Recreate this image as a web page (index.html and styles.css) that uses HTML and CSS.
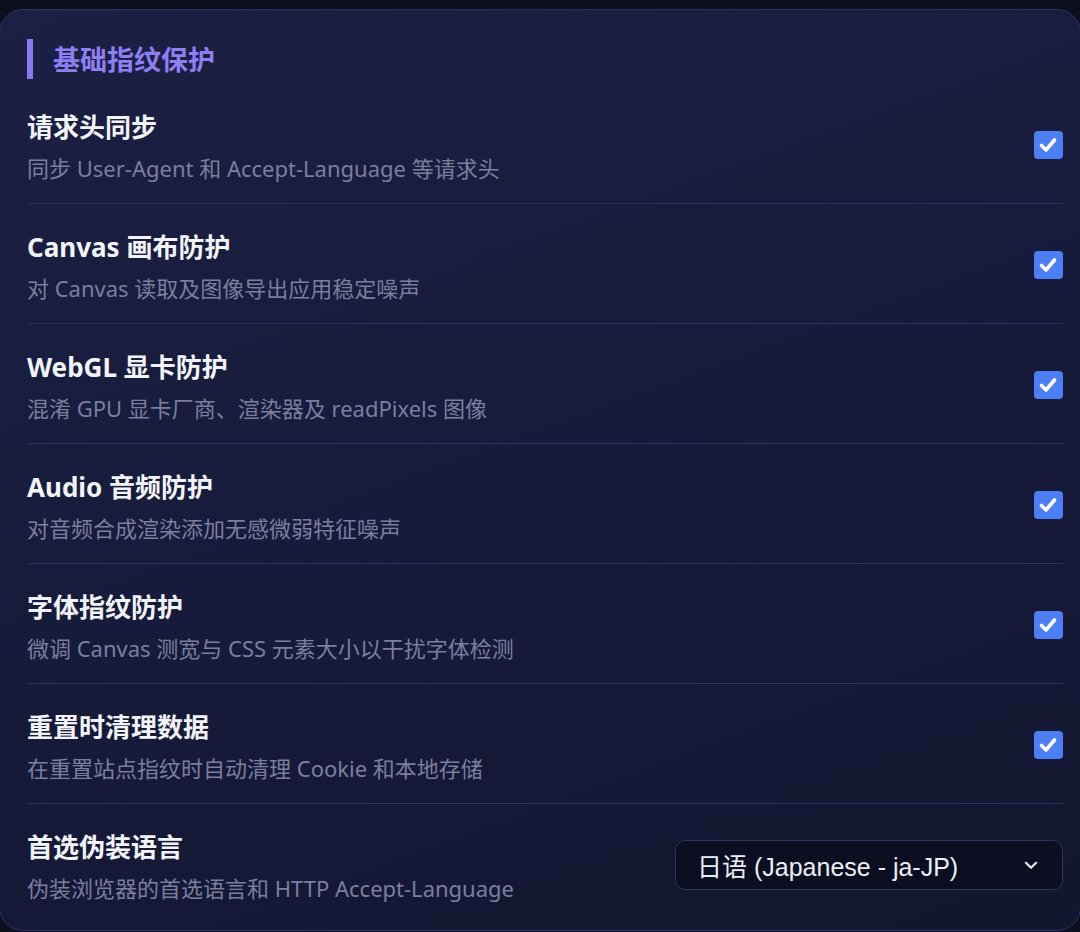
FILE: index.html
```html
<!DOCTYPE html>
<html>
<head>
    <meta charset="utf-8">
    <title>基础指纹保护</title>
    <link rel="stylesheet" href="styles.css">
</head>
<body>
    <div class="panel">
        <h2 class="section-title">基础指纹保护</h2>
        <div class="row">
            <div class="info">
                <div class="name">请求头同步</div>
                <div class="desc">同步 User-Agent 和 Accept-Language 等请求头</div>
            </div>
            <span class="check"><svg viewBox="0 0 28 28"><path d="M7.5 14.5l4.5 4.5 8.5-10"/></svg></span>
        </div>
        <div class="row">
            <div class="info">
                <div class="name">Canvas 画布防护</div>
                <div class="desc">对 Canvas 读取及图像导出应用稳定噪声</div>
            </div>
            <span class="check"><svg viewBox="0 0 28 28"><path d="M7.5 14.5l4.5 4.5 8.5-10"/></svg></span>
        </div>
        <div class="row">
            <div class="info">
                <div class="name">WebGL 显卡防护</div>
                <div class="desc">混淆 GPU 显卡厂商、渲染器及 readPixels 图像</div>
            </div>
            <span class="check"><svg viewBox="0 0 28 28"><path d="M7.5 14.5l4.5 4.5 8.5-10"/></svg></span>
        </div>
        <div class="row">
            <div class="info">
                <div class="name">Audio 音频防护</div>
                <div class="desc">对音频合成渲染添加无感微弱特征噪声</div>
            </div>
            <span class="check"><svg viewBox="0 0 28 28"><path d="M7.5 14.5l4.5 4.5 8.5-10"/></svg></span>
        </div>
        <div class="row">
            <div class="info">
                <div class="name">字体指纹防护</div>
                <div class="desc">微调 Canvas 测宽与 CSS 元素大小以干扰字体检测</div>
            </div>
            <span class="check"><svg viewBox="0 0 28 28"><path d="M7.5 14.5l4.5 4.5 8.5-10"/></svg></span>
        </div>
        <div class="row">
            <div class="info">
                <div class="name">重置时清理数据</div>
                <div class="desc">在重置站点指纹时自动清理 Cookie 和本地存储</div>
            </div>
            <span class="check"><svg viewBox="0 0 28 28"><path d="M7.5 14.5l4.5 4.5 8.5-10"/></svg></span>
        </div>
        <div class="row last">
            <div class="info">
                <div class="name">首选伪装语言</div>
                <div class="desc">伪装浏览器的首选语言和 HTTP Accept-Language</div>
            </div>
            <div class="select">
                <span>日语 (Japanese - ja-JP)</span>
                <svg viewBox="0 0 16 16"><path d="M3.5 6l4.5 4.5 4.5-4.5"/></svg>
            </div>
        </div>
    </div>
</body>
</html>
```

FILE: styles.css
```css
html, body {
    margin: 0;
    padding: 0;
    background: #0d0f1f;
}
body {
    padding-top: 9px;
    overflow: hidden;
    font-family: "Noto Sans", "Noto Sans CJK SC", sans-serif;
}
.panel {
    box-sizing: border-box;
    width: 1082px;
    height: 922px;
    margin-left: -1px;
    padding: 29px 17px 0 27px;
    border: 1px solid #2c3360;
    border-radius: 24px;
    background: linear-gradient(160deg, #1b2044 0%, #171b3b 50%, #13162f 100%);
}
.section-title {
    margin: 0 0 5px 0;
    height: 40px;
    line-height: 40px;
    border-left: 6px solid #8a79f3;
    padding-left: 20px;
    font-size: 27px;
    font-weight: bold;
    color: #8f7ef2;
    font-family: "Noto Sans CJK SC", sans-serif;
}
.row {
    display: flex;
    align-items: center;
    justify-content: space-between;
    padding: 26px 0 20px 0;
    border-bottom: 1px solid #2a3058;
}
.row.last {
    border-bottom: none;
}
.name {
    font-size: 26px;
    line-height: 34px;
    font-weight: bold;
    color: #f3f4f9;
}
.desc {
    margin-top: 9px;
    font-size: 22px;
    line-height: 30px;
    color: #7a7f9e;
}
.check {
    display: block;
    width: 29px;
    height: 28px;
    margin-top: -4px;
    border-radius: 4px;
    background: #4c7ef6;
}
.check svg {
    display: block;
    width: 28px;
    height: 28px;
    fill: none;
    stroke: #fff;
    stroke-width: 3.6;
    stroke-linecap: round;
    stroke-linejoin: round;
}
.select {
    display: flex;
    align-items: center;
    justify-content: space-between;
    box-sizing: border-box;
    width: 388px;
    height: 50px;
    margin-top: -4px;
    padding: 0 22px 0 21px;
    border: 1px solid #2e355c;
    border-radius: 10px;
    background: #0c0e21;
    color: #eceef5;
    font-size: 25px;
    font-family: "Liberation Sans", "Noto Sans CJK SC", sans-serif;
}
.select svg {
    width: 18px;
    height: 18px;
    fill: none;
    stroke: #e6e8f0;
    stroke-width: 2;
    stroke-linecap: round;
    stroke-linejoin: round;
}
```
